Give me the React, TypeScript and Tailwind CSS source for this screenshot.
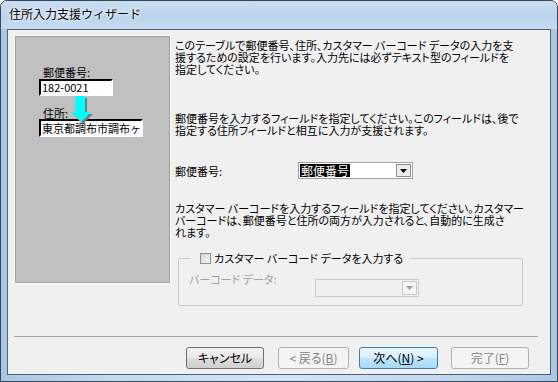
import React from 'react';

const jp = "font-['Noto_Sans_CJK_JP',sans-serif] [font-feature-settings:'palt']";

function DropArrow({ disabled }: { disabled?: boolean }) {
  return (
    <svg width="7" height="4" viewBox="0 0 7 4">
      <path d="M0 0h7L3.5 4z" fill={disabled ? '#a0a0a0' : '#000'} />
    </svg>
  );
}

function Button({ label, variant }: { label: React.ReactNode; variant: 'normal' | 'disabled' | 'default' }) {
  const styles = {
    normal: 'border-[#707070] bg-[linear-gradient(#f2f2f2_0%,#ebebeb_48%,#dddddd_52%,#cfcfcf_100%)] text-black',
    disabled: 'border-[#adb2b5] bg-[#f4f4f4] text-[#838383]',
    default: 'border-[#3c7fb1] bg-[linear-gradient(#eaf6fd_0%,#d9f0fc_48%,#bee6fd_52%,#a7d9f5_100%)] text-black',
  }[variant];
  return (
    <div className={`h-[22px] rounded-[3px] border flex items-center justify-center text-[12px] leading-none ${styles}`}>
      {label}
    </div>
  );
}

export default function App() {
  return (
    <div className={`w-[558px] h-[382px] overflow-hidden rounded-t-[7px] border border-[#3a4652] bg-[linear-gradient(90deg,#a9c6e4,#c4daf0_20%,#d2e3f4_50%,#c2d8ef_80%,#aac8e6)] flex flex-col ${jp}`}>
      {/* Title bar */}
      <div className="h-[28px] flex items-center pl-[8px] bg-[linear-gradient(#c9ddf2,#bcd4ec_60%,#c6dbf1)]">
        <span className="text-[12px] leading-none text-black [font-feature-settings:normal] [text-shadow:0_0_6px_#ffffff,0_0_3px_#ffffff] mt-[-2px]">
          住所入力支援ウィザード
        </span>
      </div>

      {/* Client */}
      <div className="flex-1 px-[6px] pb-[6px] flex">
        <div className="flex-1 border border-[#4e6173] bg-[#f0f0f0] flex flex-col">
          <div className="h-[306px] pt-[5px] pl-[6px] flex items-start">
            {/* Illustration panel */}
            <div className="w-[157px] h-[249px] border border-white">
              <div className="relative w-full h-full border border-[#a0a0a0] bg-[#c0c0c0] flex flex-col">
                <div className="ml-[27px] mt-[29px] text-[11px] leading-[12px] text-black">郵便番号:</div>
                <div className="ml-[23px] mt-[1px] w-[74px] h-[17px] bg-white border-[2px] border-t-black border-l-black border-r-white border-b-white flex items-center pl-[1px] text-[11px] leading-none">
                  182-0021
                </div>
                <div className="ml-[27px] mt-[11px] text-[11px] leading-[12px] text-black">住所:</div>
                <div className="ml-[23px] w-[104px] h-[18px] bg-white border-[2px] border-t-black border-l-black border-r-white border-b-white flex items-center pl-[1px] text-[11px] leading-none overflow-hidden whitespace-nowrap [font-feature-settings:normal]">
                  東京都調布市調布ヶ
                </div>
                <svg className="absolute left-[52px] top-[59px]" width="26" height="30" viewBox="0 0 26 30">
                  <path d="M9 2h10v16h6l-10 10-10-10h6z" fill="#7a7a7a" />
                  <path d="M7 0h10v16h6L13 26 3 16h4z" fill="#00ffff" />
                </svg>
              </div>
            </div>

            {/* Right column */}
            <div className="ml-[4px] flex flex-col text-[11px] leading-[12px] text-black whitespace-nowrap">
              <p className="mt-[4px]">
                このテーブルで郵便番号、住所、カスタマー バーコード データの入力を支<br />
                援するための設定を行います。入力先には必ずテキスト型のフィールドを<br />
                指定してください。
              </p>
              <p className="mt-[37px]">
                郵便番号を入力するフィールドを指定してください。このフィールドは、後で<br />
                指定する住所フィールドと相互に入力が支援されます。
              </p>
              <div className="mt-[26px] h-[17px] flex items-center">
                <span className="w-[123px]">郵便番号:</span>
                <div className="w-[115px] h-[17px] bg-white border border-[#a0a0a0] flex items-center">
                  <span className="ml-[1px] bg-black text-white text-[12px] leading-[13px] px-[1px]">郵便番号</span>
                  <div className="ml-auto mr-[1px] w-[15px] h-[13px] border border-[#8c8c8c] bg-[#ececec] flex items-center justify-center">
                    <DropArrow />
                  </div>
                </div>
              </div>
              <p className="mt-[23px]">
                カスタマー バーコードを入力するフィールドを指定してください。カスタマー<br />
                バーコードは、郵便番号と住所の両方が入力されると、自動的に生成さ<br />
                れます。
              </p>
              {/* Group box */}
              <div className="relative mt-[20px] ml-[3px] w-[345px] h-[48px] border border-[#c5c9cd] rounded-[2px]">
                <div className="absolute left-[12px] top-[-8px] h-[14px] pl-[9px] pr-[7px] bg-[#f0f0f0] flex items-center">
                  <span className="w-[11px] h-[11px] border border-[#8f8f8f] bg-[linear-gradient(135deg,#d2d2d2,#f7f7f7)] mr-[3px]" />
                  <span>カスタマー バーコード データを入力する</span>
                </div>
                <div className="flex items-start">
                  <span className="ml-[10px] mt-[14px] text-[#a0a0a0]">バーコード データ:</span>
                  <div className="ml-[38px] mt-[20px] w-[104px] h-[18px] border border-[#c8c8c8] bg-[#f0f0f0] flex items-center">
                    <div className="ml-auto mr-[1px] w-[15px] h-[14px] border border-[#c8c8c8] bg-[#f4f4f4] flex items-center justify-center">
                      <DropArrow disabled />
                    </div>
                  </div>
                </div>
              </div>
            </div>
          </div>

          {/* Separator */}
          <div className="ml-[6px] mr-[12px] h-px bg-[#a0a0a0]" />

          {/* Buttons */}
          <div className="mt-[10px] flex items-center pl-[178px]">
            <div className="w-[78px]">
              <Button variant="normal" label="キャンセル" />
            </div>
            <div className="ml-[14px] w-[71px]">
              <Button variant="disabled" label={<span>&lt; 戻る(<u>B</u>)</span>} />
            </div>
            <div className="ml-[10px] w-[79px]">
              <Button variant="default" label={<span>次へ(<u>N</u>) &gt;</span>} />
            </div>
            <div className="ml-[13px] w-[78px]">
              <Button variant="disabled" label={<span>完了(<u>F</u>)</span>} />
            </div>
          </div>
        </div>
      </div>
    </div>
  );
}
